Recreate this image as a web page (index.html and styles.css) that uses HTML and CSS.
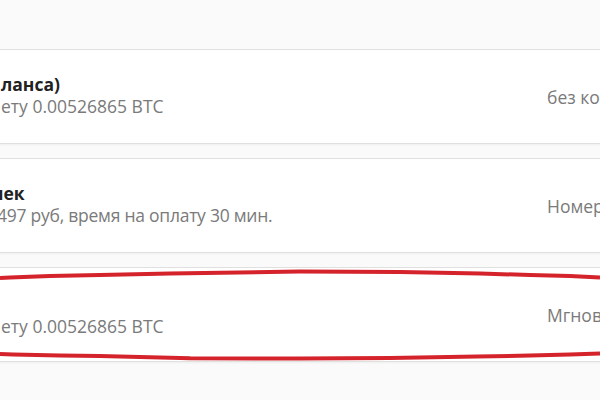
FILE: index.html
```html
<!doctype html>
<html lang="ru">
<head>
<meta charset="utf-8">
<title>Способы оплаты</title>
<meta name="viewport" content="width=device-width, initial-scale=1">
<link rel="stylesheet" href="styles.css">
</head>
<body>

<div class="methods">
  <!-- баланс -->
  <div class="method">
    <div class="info">
      <div class="title">ланса)</div>
      <div class="desc">ету 0.00526865 BTC</div>
    </div>
    <div class="note">без комиссии</div>
  </div>

  <!-- чек -->
  <div class="method">
    <div class="info shift">
      <div class="title">чек</div>
      <div class="desc">497 руб, время на оплату 30 мин.</div>
    </div>
    <div class="note">Номер кошелька</div>
  </div>

  <!-- bitcoin -->
  <div class="method">
    <div class="info">
      <div class="title"></div>
      <div class="desc">ету 0.00526865 BTC</div>
    </div>
    <div class="note">Мгновенно</div>
  </div>
</div>

<!-- красная пометка поверх третьего блока -->
<svg class="mark" width="600" height="400" viewBox="0 0 600 400">
  <polyline points="0,278 10,277.5 50,276 100,275 170,273.5 300,271.5 400,272 480,273.5 530,275 570,276 600,277.5"/>
  <polyline points="0,354 13,354.5 60,355.5 100,356 190,358.3 300,358.5 390,358 477,356.5 530,355.5 570,354.5 600,353.5"/>
</svg>

</body>
</html>
```

FILE: styles.css
```css
:root{
  --c-bg:#fafafa;
  --c-card:#fff;
  --c-line:#e0e0e0;
  --c-text:#222;
  --c-sub:#7a7a7a;
  --c-mark:#d5232c;
}
*{box-sizing:border-box;margin:0;padding:0;}
html,body{height:100%;}
body{
  font-family:"Open Sans","Liberation Sans",Arial,sans-serif;
  background:var(--c-bg);
  color:var(--c-text);
  overflow:hidden;
  position:relative;
}
.methods{
  padding-top:49px;
  margin:0 -90px 0 -20px;   /* блоки шире окна, края обрезаны */
  display:grid;
  gap:14px;
}
.method{
  background:var(--c-card);
  border:1px solid var(--c-line);
  box-shadow:0 1px 2px rgb(0 0 0 / .05);
  height:95px;
  padding:23px 20px 0;
  display:grid;
  grid-template-columns:1fr 122px;
  align-items:start;
}
.info{white-space:nowrap;}
.info.shift{margin-left:-4px;}
.info.shift .title{margin-left:-5px;}
.info.shift .desc{letter-spacing:-.25px;}
.method:last-child .desc{margin-top:2px;}
.title{
  font-size:17.5px;
  font-weight:700;
  line-height:22px;
  height:22px;
  color:var(--c-text);
}
.desc{
  font-size:17.5px;
  line-height:22px;
  color:var(--c-sub);
}
.note{
  font-size:17.5px;
  line-height:22px;
  color:var(--c-sub);
  white-space:nowrap;
  margin-top:13px;
}
.mark{
  position:absolute;
  left:0;
  top:0;
  pointer-events:none;
}
.mark polyline{
  fill:none;
  stroke:var(--c-mark);
  stroke-width:4;
  stroke-linejoin:round;
}
```
